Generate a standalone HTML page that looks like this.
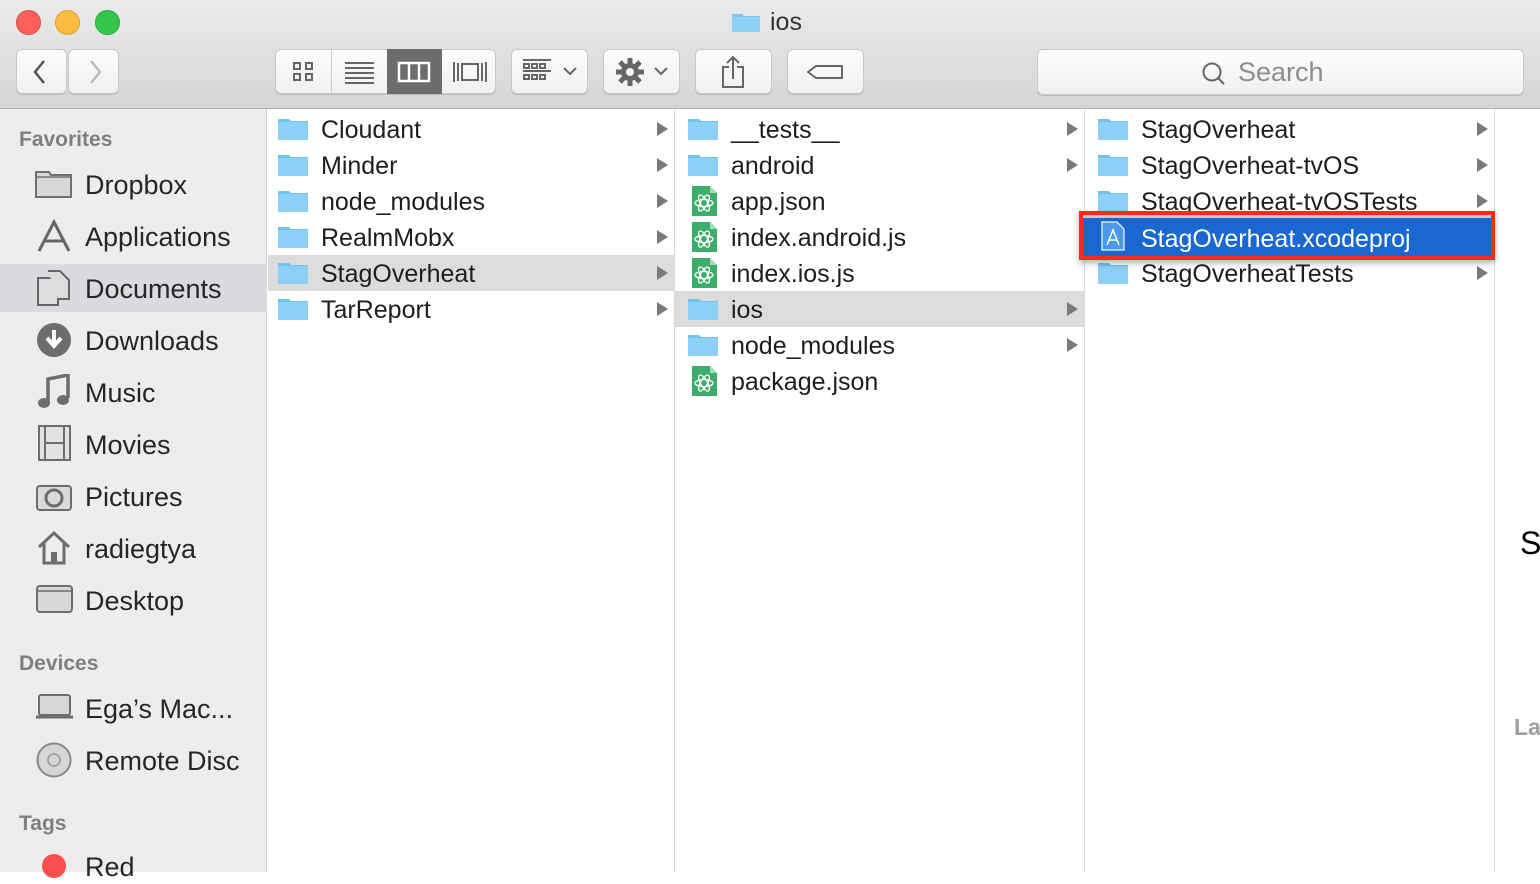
<!DOCTYPE html>
<html><head><meta charset="utf-8"><style>
*{margin:0;padding:0;box-sizing:border-box}
body{width:1540px;height:872px;overflow:hidden;background:#fff;font-family:"Liberation Sans",Arial,sans-serif;position:relative;color:#1e1e1e}
.tb{position:absolute;left:0;top:0;width:1540px;height:109px;background:linear-gradient(#ebebeb,#d5d5d5);border-bottom:1px solid #b3b3b3}
.dot{position:absolute;top:10px;width:25px;height:25px;border-radius:50%}
.btn{position:absolute;top:49px;height:45px;background:linear-gradient(#fdfdfd,#f0f0f0);border:1px solid #c8c8c8;border-radius:6px;box-shadow:0 1px 0 #bbb}
.a{position:absolute}
.side{position:absolute;left:0;top:109px;width:267px;height:763px;background:#ededee;border-right:1px solid #d4d4d4}
.sh{position:absolute;left:19px;font-size:21px;color:#7f7f7f;font-weight:bold}
.si{position:absolute;left:85px;font-size:27px;color:#262626;height:34px;line-height:34px}
.col{position:absolute;top:109px;height:763px;border-right:1px solid #dadada}
.row{position:absolute;left:0;right:0;height:36px;font-size:25px;line-height:38px;white-space:nowrap}
.row .t{position:absolute;left:53px}
.row .ar{position:absolute;right:6px;top:11px;width:0;height:0;border-top:7px solid transparent;border-bottom:7px solid transparent;border-left:11px solid #7a7a7a}
.fold{position:absolute;left:10px;top:7px;width:30px;height:22px}
</style></head><body>
<div class="tb">
<div class="dot" style="left:16px;background:#fc605c;border:1px solid #de4a45"></div>
<div class="dot" style="left:55px;background:#fdbc40;border:1px solid #dea236"></div>
<div class="dot" style="left:95px;background:#34c84a;border:1px solid #27aa35"></div>
<svg class="a" style="left:731px;top:11px" width="30" height="22" viewBox="0 0 30 22"><path d="M1 3h10l2 2h16v16H1z" fill="#7cc6f2"/><path d="M1 6h28v15H1z" fill="#8fd1f7"/></svg>
<div class="a" style="left:770px;top:8px;font-size:25px;color:#333">ios</div>
<div class="btn" style="left:16px;width:51px"></div><div class="btn" style="left:68px;width:51px"></div>
<svg class="a" style="left:30px;top:58px" width="20" height="28"><path d="M14 3L5 14l9 11" stroke="#555" stroke-width="2.5" fill="none"/></svg>
<svg class="a" style="left:86px;top:58px" width="20" height="28"><path d="M5 3l9 11-9 11" stroke="#bbb" stroke-width="2.5" fill="none"/></svg>
<div class="btn" style="left:275px;width:221px"></div>
<div class="a" style="left:331px;top:50px;width:1px;height:44px;background:#ccc"></div>
<div class="a" style="left:387px;top:49px;width:55px;height:45px;background:#6c6c6c"></div>
<svg class="a" style="left:275px;top:49px" width="221" height="45">
<g fill="none" stroke="#666" stroke-width="2"><rect x="19" y="14" width="6" height="6"/><rect x="31" y="14" width="6" height="6"/><rect x="19" y="25" width="6" height="6"/><rect x="31" y="25" width="6" height="6"/>
<path d="M70 14h29M70 19h29M70 24h29M70 29h29M70 34h29"/>
<rect x="124" y="14" width="30" height="18" stroke="#fff" stroke-width="2.5"/><path d="M134 14v18M144 14v18" stroke="#fff" stroke-width="2.5"/>
<rect x="187" y="15" width="16" height="16"/><path d="M179 13v20M183 14v18M207 14v18M211 13v20"/></g></svg>
<div class="btn" style="left:511px;width:77px"></div>
<svg class="a" style="left:511px;top:49px" width="77" height="45"><g stroke="#666" stroke-width="2" fill="none"><path d="M12 11h28M12 22h28"/><rect x="13" y="15" width="5" height="4"/><rect x="21" y="15" width="5" height="4"/><rect x="29" y="15" width="5" height="4"/><rect x="13" y="26" width="5" height="4"/><rect x="21" y="26" width="5" height="4"/><rect x="29" y="26" width="5" height="4"/><path d="M53 19l6 6 6-6"/></g></svg>
<div class="btn" style="left:603px;width:77px"></div>
<svg class="a" style="left:603px;top:49px" width="77" height="45"><g fill="#666"><circle cx="27" cy="23" r="9"/><g stroke="#666" stroke-width="5"><path d="M27 9v28M13 23h28M17 13l20 20M37 13L17 33"/></g></g><circle cx="27" cy="23" r="4" fill="#f5f5f5"/><path d="M52 19l6 6 6-6" stroke="#666" stroke-width="2" fill="none"/></svg>
<div class="btn" style="left:695px;width:77px"></div>
<svg class="a" style="left:695px;top:49px" width="77" height="45"><g stroke="#666" stroke-width="2" fill="none"><path d="M34 18h-6v20h20V18h-6M38 30V8M32 14l6-6 6 6"/></g></svg>
<div class="btn" style="left:787px;width:77px"></div>
<svg class="a" style="left:787px;top:49px" width="77" height="45"><path d="M29 17h26v12H29l-8-6z" stroke="#666" stroke-width="2" fill="none" stroke-linejoin="round"/></svg>
<div class="btn" style="left:1037px;width:487px;top:49px;height:46px"></div>
<svg class="a" style="left:1200px;top:60px" width="28" height="28"><circle cx="12" cy="12" r="8.5" stroke="#666" stroke-width="2" fill="none"/><path d="M18 18l6 6" stroke="#666" stroke-width="2"/></svg>
<div class="a" style="left:1238px;top:57px;font-size:27px;color:#8e8e8e">Search</div>
</div>

<div class="side">
<div class="sh" style="top:19px">Favorites</div>
<div class="a" style="left:0;top:155px;width:267px;height:48px;background:#d9dbde"></div>
<svg class="a" style="left:35px;top:60px" width="38" height="30"><path d="M1 3h13l2 3h20v22H1z" fill="#d7d7d7" stroke="#707070" stroke-width="2"/><path d="M1 8h35" stroke="#707070" stroke-width="1.5"/></svg>
<div class="si" style="top:59px">Dropbox</div>
<svg class="a" style="left:35px;top:110px" width="38" height="34"><g stroke="#666" stroke-width="3" fill="none"><path d="M4 32L19 3l15 29M10 22h18"/></g></svg>
<div class="si" style="top:111px">Applications</div>
<svg class="a" style="left:37px;top:161px" width="34" height="36"><path d="M1 8h14l6 6v21H1z" fill="#dcdcdc" stroke="#666" stroke-width="2"/><path d="M11 1h12l9 9v19H21" fill="#dcdcdc" stroke="#666" stroke-width="2"/></svg>
<div class="si" style="top:163px">Documents</div>
<svg class="a" style="left:36px;top:213px" width="36" height="36"><circle cx="18" cy="18" r="17" fill="#6d6d6d"/><path d="M18 8v14M11 16l7 8 7-8" stroke="#fff" stroke-width="4" fill="none"/></svg>
<div class="si" style="top:215px">Downloads</div>
<svg class="a" style="left:38px;top:265px" width="32" height="36"><path d="M10 28V5l20-4v23" stroke="#6d6d6d" stroke-width="3.5" fill="none"/><ellipse cx="6" cy="29" rx="6" ry="5" fill="#6d6d6d"/><ellipse cx="25" cy="26" rx="6" ry="5" fill="#6d6d6d"/></svg>
<div class="si" style="top:267px">Music</div>
<svg class="a" style="left:38px;top:316px" width="33" height="36"><rect x="1" y="1" width="31" height="34" fill="#e2e2e2" stroke="#6d6d6d" stroke-width="2"/><path d="M7 1v34M26 1v34M7 18h19" stroke="#6d6d6d" stroke-width="2"/></svg>
<div class="si" style="top:319px">Movies</div>
<svg class="a" style="left:36px;top:372px" width="36" height="30"><rect x="1" y="5" width="34" height="24" rx="3" fill="#dadada" stroke="#6d6d6d" stroke-width="2"/><circle cx="18" cy="17" r="8" fill="none" stroke="#6d6d6d" stroke-width="3"/></svg>
<div class="si" style="top:371px">Pictures</div>
<svg class="a" style="left:36px;top:420px" width="36" height="36"><path d="M3 18L18 4l15 14M8 14v20h20V14" stroke="#6d6d6d" stroke-width="3" fill="none"/><rect x="15" y="23" width="6" height="11" fill="#6d6d6d"/></svg>
<div class="si" style="top:423px">radiegtya</div>
<svg class="a" style="left:36px;top:476px" width="37" height="28"><rect x="1" y="1" width="35" height="26" rx="3" fill="#d7d7d7" stroke="#6d6d6d" stroke-width="2"/><path d="M1 6h35" stroke="#6d6d6d" stroke-width="1.5"/></svg>
<div class="si" style="top:475px">Desktop</div>
<div class="sh" style="top:543px">Devices</div>
<svg class="a" style="left:36px;top:585px" width="37" height="26"><rect x="3" y="1" width="31" height="20" rx="2" fill="#d7d7d7" stroke="#6d6d6d" stroke-width="2"/><path d="M0 23h37" stroke="#6d6d6d" stroke-width="3"/></svg>
<div class="si" style="top:583px">Ega’s Mac...</div>
<svg class="a" style="left:36px;top:633px" width="36" height="36"><circle cx="18" cy="18" r="16.5" fill="#d6d6d6" stroke="#888" stroke-width="2"/><circle cx="18" cy="18" r="6" fill="none" stroke="#999" stroke-width="1.5"/></svg>
<div class="si" style="top:635px">Remote Disc</div>
<div class="sh" style="top:703px">Tags</div>
<div class="a" style="left:42px;top:745px;width:24px;height:24px;border-radius:50%;background:#fc4f4f"></div>
<div class="si" style="top:741px">Red</div>
</div>

<div class="col" style="left:268px;width:407px">
<div class="row" style="top:146px;background:#dcdcdc"></div>
</div>
<div class="col" style="left:675px;width:410px">
<div class="row" style="top:182px;background:#dcdcdc"></div>
</div>
<div class="col" style="left:1085px;width:410px"></div>
<div class="a" style="left:1520px;top:525px;font-size:32px;color:#000">S</div>
<div class="a" style="left:1514px;top:714px;font-size:23px;color:#a0a0a0;font-weight:bold">La</div>

<svg width="0" height="0" style="position:absolute"><defs>
<symbol id="f" viewBox="0 0 30 22"><path d="M0 1h11l2 2h17v19H0z" fill="#74c1ee"/><path d="M0 4h30v18H0z" fill="#8dd0f7"/></symbol>
<symbol id="j" viewBox="0 0 28 30"><path d="M2 0h18l7 7v23H2z" fill="#3cae6a"/><path d="M20 0v7h7" fill="#a5dcbb"/><g stroke="#fff" stroke-width="1.3" fill="none"><ellipse cx="14" cy="17" rx="9" ry="3.5"/><ellipse cx="14" cy="17" rx="9" ry="3.5" transform="rotate(60 14 17)"/><ellipse cx="14" cy="17" rx="9" ry="3.5" transform="rotate(-60 14 17)"/></g></symbol>
</defs></svg>

<div class="a" style="left:268px;top:111px;width:406px">
<div class="row" style="top:0"><svg class="fold"><use href="#f"/></svg><span class="t">Cloudant</span><i class="ar"></i></div>
<div class="row" style="top:36px"><svg class="fold"><use href="#f"/></svg><span class="t">Minder</span><i class="ar"></i></div>
<div class="row" style="top:72px"><svg class="fold"><use href="#f"/></svg><span class="t">node_modules</span><i class="ar"></i></div>
<div class="row" style="top:108px"><svg class="fold"><use href="#f"/></svg><span class="t">RealmMobx</span><i class="ar"></i></div>
<div class="row" style="top:144px"><svg class="fold"><use href="#f"/></svg><span class="t">StagOverheat</span><i class="ar"></i></div>
<div class="row" style="top:180px"><svg class="fold"><use href="#f"/></svg><span class="t">TarReport</span><i class="ar"></i></div>
</div>
<div class="a" style="left:678px;top:111px;width:406px">
<div class="row" style="top:0"><svg class="fold"><use href="#f"/></svg><span class="t">__tests__</span><i class="ar"></i></div>
<div class="row" style="top:36px"><svg class="fold"><use href="#f"/></svg><span class="t">android</span><i class="ar"></i></div>
<div class="row" style="top:72px"><svg class="fold" style="left:12px;top:3px;width:28px;height:30px"><use href="#j"/></svg><span class="t">app.json</span></div>
<div class="row" style="top:108px"><svg class="fold" style="left:12px;top:3px;width:28px;height:30px"><use href="#j"/></svg><span class="t">index.android.js</span></div>
<div class="row" style="top:144px"><svg class="fold" style="left:12px;top:3px;width:28px;height:30px"><use href="#j"/></svg><span class="t">index.ios.js</span></div>
<div class="row" style="top:180px"><svg class="fold"><use href="#f"/></svg><span class="t">ios</span><i class="ar"></i></div>
<div class="row" style="top:216px"><svg class="fold"><use href="#f"/></svg><span class="t">node_modules</span><i class="ar"></i></div>
<div class="row" style="top:252px"><svg class="fold" style="left:12px;top:3px;width:28px;height:30px"><use href="#j"/></svg><span class="t">package.json</span></div>
</div>
<div class="a" style="left:1088px;top:111px;width:406px">
<div class="row" style="top:0"><svg class="fold"><use href="#f"/></svg><span class="t">StagOverheat</span><i class="ar"></i></div>
<div class="row" style="top:36px"><svg class="fold"><use href="#f"/></svg><span class="t">StagOverheat-tvOS</span><i class="ar"></i></div>
<div class="row" style="top:72px"><svg class="fold"><use href="#f"/></svg><span class="t">StagOverheat-tvOSTests</span><i class="ar"></i></div>
<div class="row" style="top:144px"><svg class="fold"><use href="#f"/></svg><span class="t">StagOverheatTests</span><i class="ar"></i></div>
</div>
<div class="a" style="left:1079px;top:211px;width:416px;height:49px;border:4px solid #fa2a1e;box-shadow:0 3px 6px rgba(0,0,0,.3)"></div>
<div class="a" style="left:1083px;top:215px;width:408px;height:41px;background:#1a67cf;border-top:3px solid #c9c9c9"></div>
<svg class="a" style="left:1101px;top:221px" width="24" height="30"><path d="M1 1h15l7 7v21H1z" fill="#4a9ae8" stroke="#cfe3fa" stroke-width="1.5"/><path d="M6 24l6-15 6 15M8 19h8" stroke="#fff" stroke-width="1.5" fill="none"/></svg>
<div class="a" style="left:1141px;top:221px;font-size:25px;line-height:36px;color:#fff">StagOverheat.xcodeproj</div>
</body></html>
